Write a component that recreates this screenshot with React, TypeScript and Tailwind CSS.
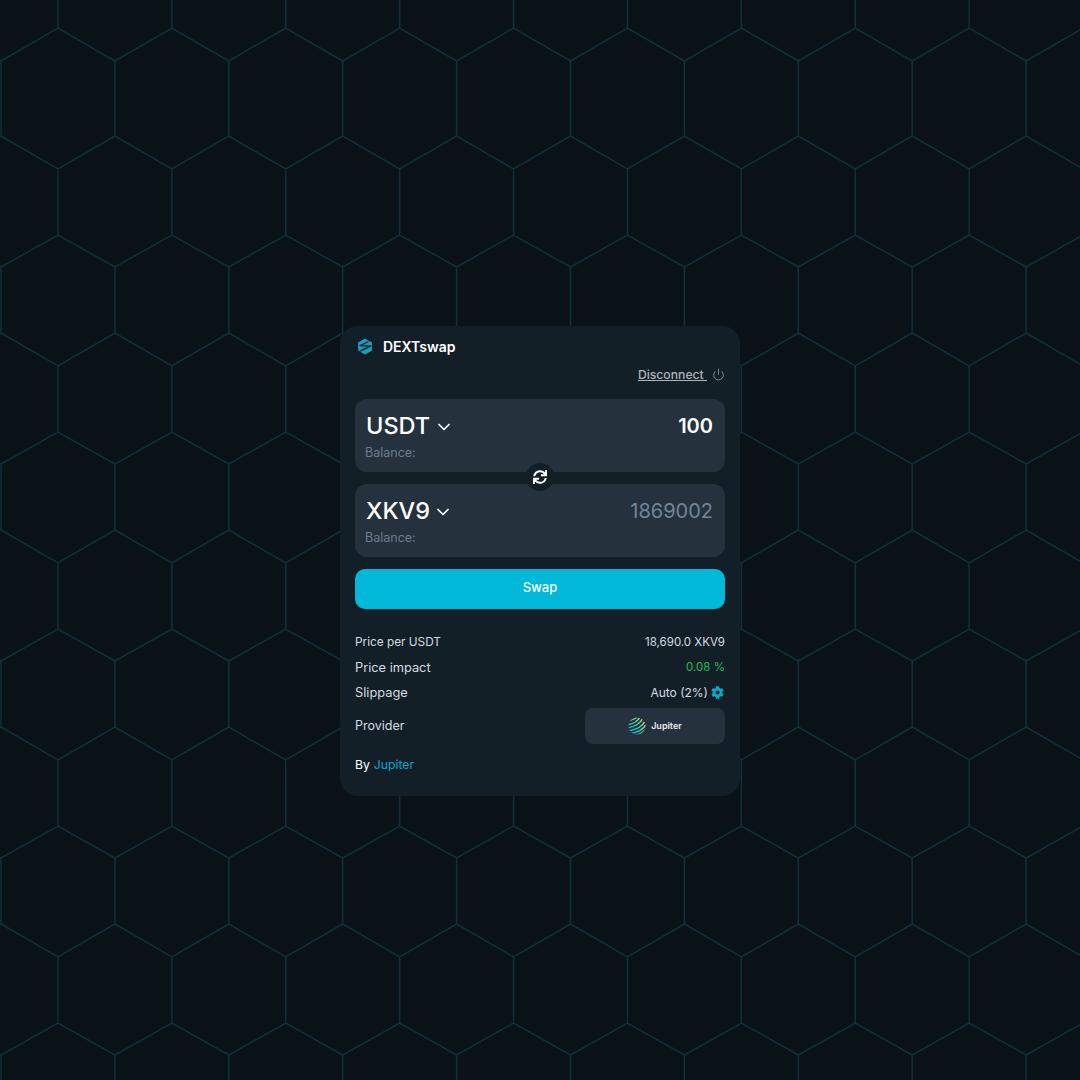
import { ChevronDown, Power } from "lucide-react";
import { FaCog, FaSync } from "react-icons/fa";

const XS = 113.9;
const X0 = 1;
// y levels of the honeycomb; the first row of the wallpaper is slightly taller
const buildHoneycomb = () => {
  const segs: string[] = [];
  for (let r = 0; r < 6; r++) {
    const ofs = r * 197;
    const apexTop = r === 0 ? 28 : 38 + ofs;
    const shTop = r === 0 ? 61 : 70 + ofs;
    const shBot = 136 + ofs;
    const apexBot = 169 + ofs;
    const nextApex = 235 + ofs;
    for (let c = -1; c < 11; c++) {
      const x = X0 + c * XS;
      const mx = x + XS / 2;
      const rx = x + XS;
      segs.push(`M${x} ${shBot}V${shTop}L${mx} ${apexTop}L${rx} ${shTop}`);
      segs.push(`M${x} ${shBot}L${mx} ${apexBot}L${rx} ${shBot}`);
      segs.push(`M${mx} ${apexBot}V${nextApex}`);
    }
  }
  for (let c = 0; c < 11; c++) {
    segs.push(`M${X0 + XS / 2 + (c - 1) * XS} 0V28`);
  }
  return segs.join("");
};

const Logo = () => (
  <svg width="16" height="17" viewBox="0 0 16 17">
    <path d="M8 0.5 15 4.5V12.5L8 16.5 1 12.5V4.5Z" fill="#1b9ebd" />
    <path d="M2.2 6.6H10.4L3 10.8V12.6L13.8 6.6V5H2.2Z" fill="#141f27" opacity="0" />
    <path d="M1 7.8 10.6 3.6 12.8 3.6 3 8.6H11L1.6 13 4 13.4 15 8.2 13.6 7.2H6Z" fill="#131f27" />
  </svg>
);

const JupiterLogo = () => (
  <svg width="18" height="18" viewBox="0 0 18 18">
    <defs>
      <linearGradient id="jg" x1="0.65" y1="0" x2="0.35" y2="1">
        <stop offset="0" stopColor="#c8f284" />
        <stop offset="0.55" stopColor="#5fcfa0" />
        <stop offset="1" stopColor="#14c0d8" />
      </linearGradient>
      <clipPath id="jc">
        <circle cx="9" cy="9" r="8.6" />
      </clipPath>
    </defs>
    <g clipPath="url(#jc)" fill="none" stroke="url(#jg)" strokeWidth="1.35">
      <path d="M-1 5C3 3 7 2 9 0" />
      <path d="M-1 8C5 7 10 4 12 0" />
      <path d="M-1 11C6 10 12 7 15 1" />
      <path d="M0 14C8 13 15 9 17.5 3" />
      <path d="M2 16.5C9 16 16 12 19 6" />
      <path d="M6 18.5C11 18 17 15 19 10" />
    </g>
  </svg>
);

const Row = ({ label, labelClass, children }: { label: string; labelClass: string; children: React.ReactNode }) => (
  <div className="flex h-[25px] items-center justify-between text-[#d5dbe1]">
    <span className={labelClass}>{label}</span>
    {children}
  </div>
);

const TokenPanel = ({ token, amount, muted, gap }: { token: string; amount: string; muted?: boolean; gap: string }) => (
  <div className="h-[73px] rounded-xl bg-[#25313c] pl-[11px] pr-3 pt-3">
    <div className="flex h-[30px] items-center justify-between">
      <div className={`flex items-center text-[23.5px] font-medium text-white ${gap}`}>
        <span>{token}</span>
        <ChevronDown size={20} strokeWidth={2.1} className="mt-[2px]" />
      </div>
      <span className={muted ? "text-[20px] text-[#71859b]" : "text-[20px] font-semibold text-white"}>{amount}</span>
    </div>
    <div className="-ml-px mt-[2px] flex h-5 items-center text-[12.5px] text-[#6a7e94]">Balance:</div>
  </div>
);

export default function App() {
  return (
    <div className="relative flex h-[1080px] w-full items-start justify-center overflow-hidden bg-[#0a1218] pt-[326px] font-['Inter','Liberation_Sans',sans-serif]">
      <svg className="absolute inset-0" width="1080" height="1080" viewBox="0 0 1080 1080">
        <path d={buildHoneycomb()} fill="none" stroke="#11303a" strokeWidth="1.5" />
      </svg>

      <div className="relative w-[400px] rounded-[18px] bg-[#131f27] px-[15px] pb-[21px] pt-[10px]">
        <div className="flex h-5 items-center gap-[10px] pl-[2px]">
          <Logo />
          <span className="text-[14px] font-semibold text-white">DEXTswap</span>
        </div>
        <div className="mb-[14px] mt-[9px] flex h-5 items-center justify-end gap-[5px] text-[12.2px] font-medium text-[#aeb4ba]">
          <span className="underline">Disconnect&nbsp;</span>
          <Power size={13} strokeWidth={1.3} className="mb-[2px]" />
        </div>

        <div className="relative flex flex-col gap-3">
          <TokenPanel token="USDT" amount="100" gap="gap-[4px]" />
          <TokenPanel token="XKV9" amount="1869002" muted gap="gap-[3px]" />
          <div className="absolute left-1/2 top-[64px] flex h-[28px] w-[28px] -translate-x-1/2 items-center justify-center rounded-full bg-[#131f27] text-white">
            <FaSync size={14} />
          </div>
        </div>

        <button className="mt-3 flex h-10 w-full items-center justify-center rounded-[10px] bg-[#00b8d9] pb-[2px] text-[13px] font-medium text-white">
          Swap
        </button>

        <div className="mt-[21px]">
          <Row label="Price per USDT" labelClass="text-[11.8px]">
            <span className="text-[11.5px]">18,690.0 XKV9</span>
          </Row>
          <Row label="Price impact" labelClass="text-[12.8px]">
            <span className="text-[11.5px] text-[#0cc05f]">0.08 %</span>
          </Row>
          <Row label="Slippage" labelClass="text-[12.8px]">
            <span className="flex items-center gap-[3px] text-[12px]">
              Auto (2%)
              <FaCog size={13} className="mr-px text-[#06a8cc]" />
            </span>
          </Row>
          <div className="mt-[3px] flex items-center justify-between text-[#d5dbe1]">
            <span className="text-[12.5px]">Provider</span>
            <div className="flex h-9 w-[140px] items-center justify-center gap-[5px] rounded-lg bg-[#25313c]">
              <JupiterLogo />
              <span className="text-[9px] font-semibold text-[#e8ebee]">Jupiter</span>
            </div>
          </div>
          <div className="mt-[11px] flex h-5 items-center gap-1 text-[12.2px] text-white">
            By <span className="text-[#06a8cc]">Jupiter</span>
          </div>
        </div>
      </div>
    </div>
  );
}
